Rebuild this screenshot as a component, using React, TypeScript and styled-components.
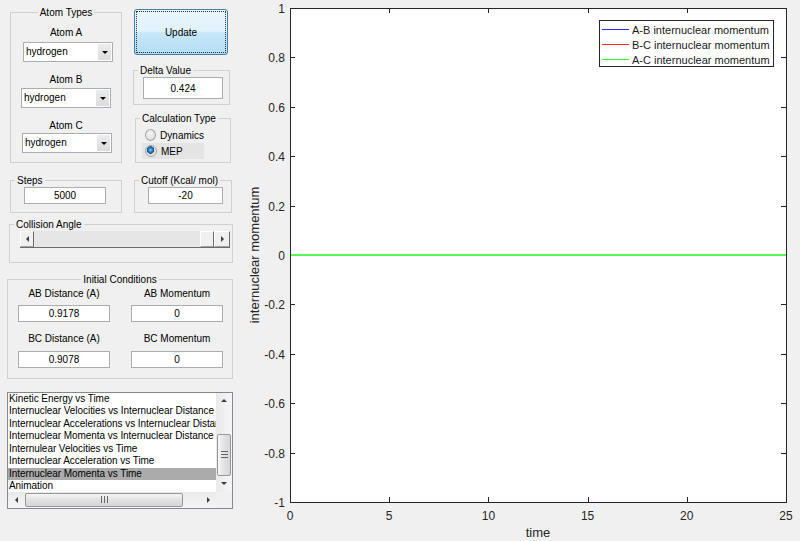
import React from 'react';
import styled, { createGlobalStyle } from 'styled-components';

const GlobalStyle = createGlobalStyle`
  html, body {
    margin: 0;
    padding: 0;
    background: #f0f0f0;
  }
  body {
    font-family: 'Liberation Sans', Arial, sans-serif;
    font-size: 10px;
    color: #000;
  }
`;

const Window = styled.div`
  display: flex;
  width: 800px;
  height: 541px;
  overflow: hidden;
  background: #f0f0f0;
`;

const Sidebar = styled.div`
  width: 240px;
  flex: none;
  display: flex;
  flex-direction: column;
  align-items: flex-start;
`;

const Row = styled.div<{ $mt: number }>`
  display: flex;
  align-items: flex-start;
  margin-top: ${p => p.$mt}px;
  padding-left: 10px;
`;

const Stack = styled.div`
  display: flex;
  flex-direction: column;
  align-items: flex-start;
  margin-left: 12px;
`;

const Panel = styled.fieldset<{ $w: number; $mt?: number; $ml?: number; $pt?: number; $pb?: number }>`
  box-sizing: border-box;
  width: ${p => p.$w}px;
  margin: ${p => p.$mt ?? 0}px 0 0 ${p => p.$ml ?? 0}px;
  padding: ${p => p.$pt ?? 0}px 0 ${p => p.$pb ?? 0}px;
  border: 1px solid #d0d0d0;
  min-inline-size: 0;
  display: flex;
  flex-direction: column;
  align-items: flex-start;
`;

const Title = styled.legend<{ $center?: boolean }>`
  padding: 0 2px;
  margin: ${p => (p.$center ? '0 auto' : '0 0 0 4px')};
  line-height: 13px;
  font-size: 10px;
`;

const Caption = styled.div<{ $mt: number }>`
  align-self: stretch;
  margin-top: ${p => p.$mt}px;
  line-height: 13px;
  text-align: center;
`;

const Tri = styled.span<{ $dir: 'up' | 'down' | 'left' | 'right'; $s?: number; $c?: string }>`
  width: 0;
  height: 0;
  border: ${p => p.$s ?? 3}px solid transparent;
  ${p => {
    const c = p.$c ?? '#3a3a3a';
    const s = p.$s ?? 3;
    switch (p.$dir) {
      case 'up':
        return `border-top-width: 0; border-bottom: ${s}px solid ${c};`;
      case 'down':
        return `border-bottom-width: 0; border-top: ${s}px solid ${c};`;
      case 'left':
        return `border-left-width: 0; border-right: ${s}px solid ${c};`;
      default:
        return `border-right-width: 0; border-left: ${s}px solid ${c};`;
    }
  }}
`;

const Select = styled.div<{ $mt: number; $ml: number }>`
  box-sizing: border-box;
  display: flex;
  align-items: stretch;
  width: 90px;
  height: 20px;
  margin: ${p => p.$mt}px 0 0 ${p => p.$ml}px;
  border: 1px solid #a9aeb5;
  background: #fff;
`;

const SelectText = styled.span`
  flex: 1;
  padding-left: 2px;
  line-height: 18px;
`;

const SelectButton = styled.span`
  width: 13px;
  margin: 1px;
  display: flex;
  align-items: center;
  justify-content: center;
  background: linear-gradient(#ececec, #dcdcdc);
`;

const UpdateButton = styled.button`
  box-sizing: border-box;
  width: 94px;
  height: 46px;
  margin-top: 3px;
  padding: 0;
  border: 1px solid #3c7fb1;
  border-radius: 3px;
  background: linear-gradient(#eaf6fd 0%, #e0f2fb 48%, #c6e7f8 52%, #b3ddf4 100%);
  font: inherit;
  color: #000;
  outline: 1px dotted #333;
  outline-offset: -3px;
`;

const Field = styled.input<{ $w: number; $h: number; $ml?: number; $mt?: number }>`
  box-sizing: border-box;
  width: ${p => p.$w}px;
  height: ${p => p.$h}px;
  margin: ${p => p.$mt ?? 0}px 0 0 ${p => p.$ml ?? 0}px;
  padding: 0;
  border: 1px solid #abadb3;
  background: #fff;
  font: inherit;
  color: #000;
  text-align: center;
  outline: none;
`;

const RadioRow = styled.div<{ $active?: boolean }>`
  box-sizing: border-box;
  display: flex;
  align-items: center;
  gap: 4px;
  width: 62px;
  height: 16px;
  margin-left: 6px;
  padding-left: 3px;
  background: ${p => (p.$active ? '#e4e4e4' : 'transparent')};
`;

const RadioDot = styled.span<{ $checked?: boolean }>`
  box-sizing: border-box;
  width: 12px;
  height: 12px;
  border-radius: 50%;
  border: 1px solid #a3a3a3;
  background: ${p =>
    p.$checked
      ? 'radial-gradient(circle at 45% 40%, #9fd6f7 0, #3b8ed0 1.5px, #0f4f94 3.5px, #dcdcdc 4px, #f2f2f2 100%)'
      : 'radial-gradient(circle at 40% 35%, #f4f4f4 0, #d6d6d6 100%)'};
`;

const Slider = styled.div`
  box-sizing: border-box;
  display: flex;
  width: 210px;
  height: 17px;
  margin-left: 10px;
  border-bottom: 1px solid #6b6b6b;
  background: #e6e6e6;
`;

const RaisedBox = styled.span<{ $w: number }>`
  box-sizing: border-box;
  width: ${p => p.$w}px;
  display: flex;
  align-items: center;
  justify-content: center;
  border: 1px solid;
  border-color: #fff #6b6b6b #a0a0a0 #fff;
  background: #f0f0f0;
`;

const SliderTrack = styled.span`
  flex: 1;
`;

const InitialGrid = styled.div`
  display: grid;
  grid-template-columns: 92px 92px;
  column-gap: 21px;
  row-gap: 10px;
  padding: 1px 0 10px 10px;
`;

const Cell = styled.div`
  display: flex;
  flex-direction: column;
`;

const CellLabel = styled.div`
  line-height: 13px;
  text-align: center;
`;

const ListBox = styled.div`
  box-sizing: border-box;
  display: grid;
  grid-template-columns: 208px 16px;
  grid-template-rows: 99px 16px;
  width: 226px;
  height: 117px;
  margin: 13px 0 0 7px;
  border: 1px solid #828790;
  background: #fff;
`;

const Items = styled.div`
  overflow: hidden;
`;

const Item = styled.div<{ $selected?: boolean }>`
  height: 12.5px;
  line-height: 12.5px;
  padding-left: 1px;
  white-space: nowrap;
  overflow: hidden;
  letter-spacing: -0.06px;
  background: ${p => (p.$selected ? '#ababab' : 'transparent')};
`;

const ScrollBar = styled.div<{ $vertical?: boolean }>`
  display: flex;
  flex-direction: ${p => (p.$vertical ? 'column' : 'row')};
  background: linear-gradient(${p => (p.$vertical ? '90deg' : '180deg')}, #e9e9e9, #f6f6f6);
`;

const ScrollArrow = styled.span`
  flex: none;
  width: 16px;
  height: 16px;
  display: flex;
  align-items: center;
  justify-content: center;
`;

const ScrollTrack = styled.span<{ $vertical?: boolean }>`
  flex: 1;
  display: flex;
  flex-direction: ${p => (p.$vertical ? 'column' : 'row')};
  justify-content: ${p => (p.$vertical ? 'flex-end' : 'flex-start')};
`;

const ScrollThumb = styled.span<{ $vertical?: boolean; $len: number }>`
  box-sizing: border-box;
  display: flex;
  align-items: center;
  justify-content: center;
  ${p => (p.$vertical ? `height: ${p.$len}px; margin: 0 1px;` : `width: ${p.$len}px; margin: 1px 0 1px 1px;`)}
  border: 1px solid #979797;
  border-radius: 2px;
  background: linear-gradient(${p => (p.$vertical ? '90deg' : '180deg')}, #f6f6f6, #e2e2e2 50%, #d6d6d6);
`;

const Grip = styled.span<{ $vertical?: boolean }>`
  width: 7px;
  height: 7px;
  background: repeating-linear-gradient(
    ${p => (p.$vertical ? '180deg' : '90deg')},
    #666 0 1px,
    transparent 1px 3px
  );
`;

const Corner = styled.span`
  background: #f0f0f0;
`;

const PlotArea = styled.div`
  position: relative;
  flex: 1;
  height: 541px;
`;

const Chart = styled.svg`
  display: block;
  font-family: 'Liberation Sans', Arial, sans-serif;
`;

const Legend = styled.div`
  position: absolute;
  left: 359px;
  top: 20px;
  box-sizing: border-box;
  width: 175px;
  height: 47px;
  padding-top: 1px;
  border: 1px solid #262626;
  background: #fff;
  font-size: 11px;
  color: #1a1a1a;
`;

const LegendRow = styled.div`
  display: flex;
  align-items: center;
  height: 15px;
`;

const LegendLine = styled.span<{ $color: string }>`
  width: 27px;
  height: 0;
  margin: 0 3px 0 2px;
  border-top: 1px solid ${p => p.$color};
`;

const AX = { l: 50, r: 546, t: 8, b: 502 };
const xTicks = [0, 5, 10, 15, 20, 25];
const yTicks = ['1', '0.8', '0.6', '0.4', '0.2', '0', '-0.2', '-0.4', '-0.6', '-0.8', '-1'];
const xPos = (v: number) => AX.l + (v / 25) * (AX.r - AX.l);
const yPos = (v: number) => AX.b - ((v + 1) / 2) * (AX.b - AX.t);

const listItems = [
  'Kinetic Energy vs Time',
  'Internuclear Velocities vs Internuclear Distance',
  'Internuclear Accelerations vs Internuclear Distance',
  'Internuclear Momenta vs Internuclear Distance',
  'Internulear Velocities vs Time',
  'Internuclear Acceleration vs Time',
  'Internuclear Momenta vs Time',
  'Animation',
];

const legendItems = [
  { color: '#2b2bff', label: 'A-B internuclear momentum' },
  { color: '#ff2b2b', label: 'B-C internuclear momentum' },
  { color: '#2bff2b', label: 'A-C internuclear momentum' },
];

const AtomSelect: React.FC<{ mt: number; ml: number }> = ({ mt, ml }) => (
  <Select $mt={mt} $ml={ml}>
    <SelectText>hydrogen</SelectText>
    <SelectButton>
      <Tri $dir="down" $c="#000" />
    </SelectButton>
  </Select>
);

const Plot = () => (
  <Chart width={560} height={541} viewBox="0 0 560 541">
    <rect x={AX.l + 0.5} y={AX.t + 0.5} width={AX.r - AX.l} height={AX.b - AX.t} fill="#fff" />
    {xTicks.map(v => {
      const x = Math.round(xPos(v)) + 0.5;
      return (
        <g key={`x${v}`}>
          <line x1={x} x2={x} y1={AX.t} y2={AX.t + 5} stroke="#262626" />
          <line x1={x} x2={x} y1={AX.b} y2={AX.b - 5} stroke="#262626" />
          <text x={xPos(v)} y={520} fontSize={12} fill="#262626" textAnchor="middle">
            {v}
          </text>
        </g>
      );
    })}
    {yTicks.map(label => {
      const y = Math.round(yPos(parseFloat(label))) + 0.5;
      return (
        <g key={`y${label}`}>
          <line x1={AX.l} x2={AX.l + 5} y1={y} y2={y} stroke="#262626" />
          <line x1={AX.r} x2={AX.r - 5} y1={y} y2={y} stroke="#262626" />
          <text x={45} y={y + 4} fontSize={12} fill="#262626" textAnchor="end">
            {label}
          </text>
        </g>
      );
    })}
    <line x1={AX.l} x2={AX.r} y1={255} y2={255} stroke="#55f855" strokeWidth={2} />
    <rect
      x={AX.l + 0.5}
      y={AX.t + 0.5}
      width={AX.r - AX.l}
      height={AX.b - AX.t}
      fill="none"
      stroke="#262626"
    />
    <text x={298} y={537} fontSize={13} fill="#262626" textAnchor="middle">
      time
    </text>
    <text transform="translate(19 255) rotate(-90)" fontSize={13} fill="#262626" textAnchor="middle">
      internuclear momentum
    </text>
  </Chart>
);

export default function App() {
  return (
    <>
      <GlobalStyle />
      <Window>
        <Sidebar>
          <Row $mt={6}>
            <Panel $w={112} $pb={9}>
              <Title $center>Atom Types</Title>
              <Caption $mt={7}>Atom A</Caption>
              <AtomSelect mt={3} ml={12} />
              <Caption $mt={10.5}>Atom B</Caption>
              <AtomSelect mt={2.5} ml={10} />
              <Caption $mt={11}>Atom C</Caption>
              <AtomSelect mt={1} ml={11} />
            </Panel>
            <Stack>
              <UpdateButton>Update</UpdateButton>
              <Panel $w={97} $mt={9} $ml={-1} $pb={5}>
                <Title>Delta Value</Title>
                <Field $w={80} $h={22} $ml={9} readOnly value="0.424" />
              </Panel>
              <Panel $w={96} $mt={7} $ml={1} $pt={2} $pb={3}>
                <Title>Calculation Type</Title>
                <RadioRow>
                  <RadioDot />
                  Dynamics
                </RadioRow>
                <RadioRow $active>
                  <RadioDot $checked />
                  MEP
                </RadioRow>
              </Panel>
            </Stack>
          </Row>

          <Row $mt={10.5}>
            <Panel $w={112} $pb={8}>
              <Title>Steps</Title>
              <Field $w={82} $h={17} $ml={13} readOnly value="5000" />
            </Panel>
            <Panel $w={98} $ml={12} $pb={8}>
              <Title>Cutoff (Kcal/ mol)</Title>
              <Field $w={75} $h={17} $ml={13} readOnly value="-20" />
            </Panel>
          </Row>

          <Panel $w={224} $mt={5} $ml={9} $pb={14}>
            <Title>Collision Angle</Title>
            <Slider>
              <RaisedBox $w={14}>
                <Tri $dir="left" $s={3} />
              </RaisedBox>
              <SliderTrack />
              <RaisedBox $w={14} />
              <RaisedBox $w={16}>
                <Tri $dir="right" $s={3} />
              </RaisedBox>
            </Slider>
          </Panel>

          <Panel $w={226} $mt={10} $ml={7}>
            <Title $center>Initial Conditions</Title>
            <InitialGrid>
              <Cell>
                <CellLabel>AB Distance (A)</CellLabel>
                <Field $w={92} $h={17} $mt={5.5} readOnly value="0.9178" />
              </Cell>
              <Cell>
                <CellLabel>AB Momentum</CellLabel>
                <Field $w={92} $h={17} $mt={5.5} readOnly value="0" />
              </Cell>
              <Cell>
                <CellLabel>BC Distance (A)</CellLabel>
                <Field $w={92} $h={17} $mt={5.5} readOnly value="0.9078" />
              </Cell>
              <Cell>
                <CellLabel>BC Momentum</CellLabel>
                <Field $w={92} $h={17} $mt={5.5} readOnly value="0" />
              </Cell>
            </InitialGrid>
          </Panel>

          <ListBox>
            <Items>
              {listItems.map((t, i) => (
                <Item key={t} $selected={i === 6}>
                  {t}
                </Item>
              ))}
            </Items>
            <ScrollBar $vertical>
              <ScrollArrow>
                <Tri $dir="up" />
              </ScrollArrow>
              <ScrollTrack $vertical>
                <ScrollThumb $vertical $len={42}>
                  <Grip $vertical />
                </ScrollThumb>
              </ScrollTrack>
              <ScrollArrow>
                <Tri $dir="down" />
              </ScrollArrow>
            </ScrollBar>
            <ScrollBar>
              <ScrollArrow>
                <Tri $dir="left" />
              </ScrollArrow>
              <ScrollTrack>
                <ScrollThumb $len={158}>
                  <Grip />
                </ScrollThumb>
              </ScrollTrack>
              <ScrollArrow>
                <Tri $dir="right" />
              </ScrollArrow>
            </ScrollBar>
            <Corner />
          </ListBox>
        </Sidebar>

        <PlotArea>
          <Plot />
          <Legend>
            {legendItems.map(l => (
              <LegendRow key={l.label}>
                <LegendLine $color={l.color} />
                {l.label}
              </LegendRow>
            ))}
          </Legend>
        </PlotArea>
      </Window>
    </>
  );
}
